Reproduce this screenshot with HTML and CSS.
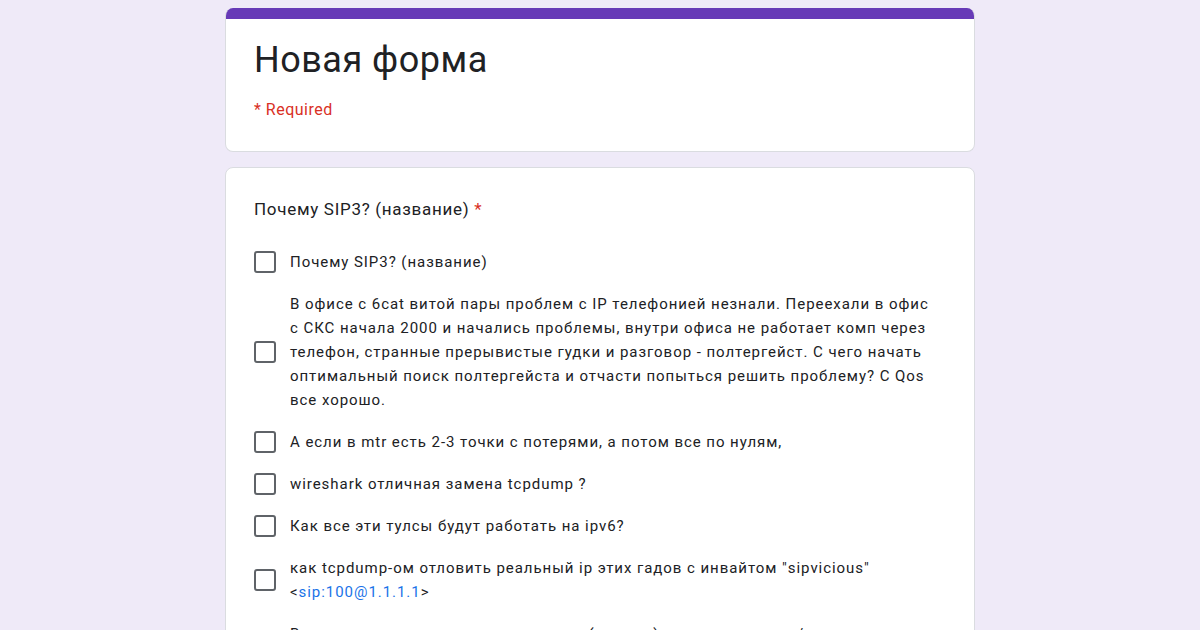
FILE: index.html
```html
<!DOCTYPE html>
<html lang="ru">
<head>
    <meta charset="UTF-8">
    <title>Новая форма</title>
    <link rel="stylesheet" href="styles.css">
</head>
<body>
    <div class="form-wrap">
        <div class="card header-card">
            <div class="header-bar"></div>
            <div class="header-body">
                <h1 class="form-title">Новая форма</h1>
                <div class="required-note">* Required</div>
            </div>
        </div>

        <div class="card question-card">
            <div class="question-title">Почему SIP3? (название) <span class="star">*</span></div>
            <div class="options">
                <label class="option"><span class="box"></span><span class="opt-text">Почему SIP3? (название)</span></label>
                <label class="option"><span class="box"></span><span class="opt-text">В офисе с 6cat витой пары проблем с IP телефонией незнали. Переехали в офис с СКС начала 2000 и начались проблемы, внутри офиса не работает комп через телефон, странные прерывистые гудки и разговор - полтергейст. С чего начать оптимальный поиск полтергейста и отчасти попыться решить проблему? С Qos все хорошо.</span></label>
                <label class="option"><span class="box"></span><span class="opt-text">А если в mtr есть 2-3 точки с потерями, а потом все по нулям,</span></label>
                <label class="option"><span class="box"></span><span class="opt-text">wireshark отличная замена tcpdump ?</span></label>
                <label class="option"><span class="box"></span><span class="opt-text">Как все эти тулсы будут работать на ipv6?</span></label>
                <label class="option"><span class="box"></span><span class="opt-text">как tcpdump-ом отловить реальный ip этих гадов с инвайтом "sipvicious" &lt;<a href="#" class="link">sip:100@1.1.1.1</a>&gt;</span></label>
                <label class="option"><span class="box"></span><span class="opt-text">Возможность получать уведомления (в почту) при регистрации/потере регистрации</span></label>
            </div>
        </div>
    </div>
</body>
</html>
```

FILE: styles.css
```css
html, body {
    margin: 0;
    padding: 0;
    background-color: #efeaf8;
    font-family: Roboto, Arial, sans-serif;
    color: #202124;
}

body {
    height: 630px;
    overflow: hidden;
}

.form-wrap {
    width: 750px;
    margin: 8px auto 0 auto;
    display: flex;
    flex-direction: column;
    gap: 15px;
}

.card {
    background-color: #fff;
    border: 1px solid #dadce0;
    border-radius: 8px;
    box-sizing: border-box;
}

.header-card {
    overflow: hidden;
    border-top: none;
}

.header-bar {
    height: 11px;
    background-color: #673ab7;
}

.header-body {
    padding: 19px 28px 32px 28px;
}

.form-title {
    margin: 0;
    font-size: 36px;
    font-weight: 400;
    line-height: 44px;
    letter-spacing: 0.5px;
    color: #202124;
}

.required-note {
    margin-top: 18px;
    font-size: 16px;
    letter-spacing: 0.5px;
    color: #d93025;
}

.question-card {
    padding: 29px 28px 0 28px;
}

.question-title {
    font-size: 17px;
    line-height: 24px;
    letter-spacing: 0.7px;
}

.star {
    color: #d93025;
}

.options {
    margin-top: 29px;
    display: flex;
    flex-direction: column;
    gap: 18px;
}

.option {
    display: flex;
    align-items: center;
    gap: 14px;
}

.box {
    flex: 0 0 auto;
    width: 18px;
    height: 18px;
    border: 2px solid #5f6368;
    border-radius: 3px;
}

.opt-text {
    font-size: 15px;
    line-height: 24px;
    color: #202124;
    letter-spacing: 0.95px;
    padding-right: 8px;
}

.link {
    color: #1a73e8;
    text-decoration: none;
}
```
